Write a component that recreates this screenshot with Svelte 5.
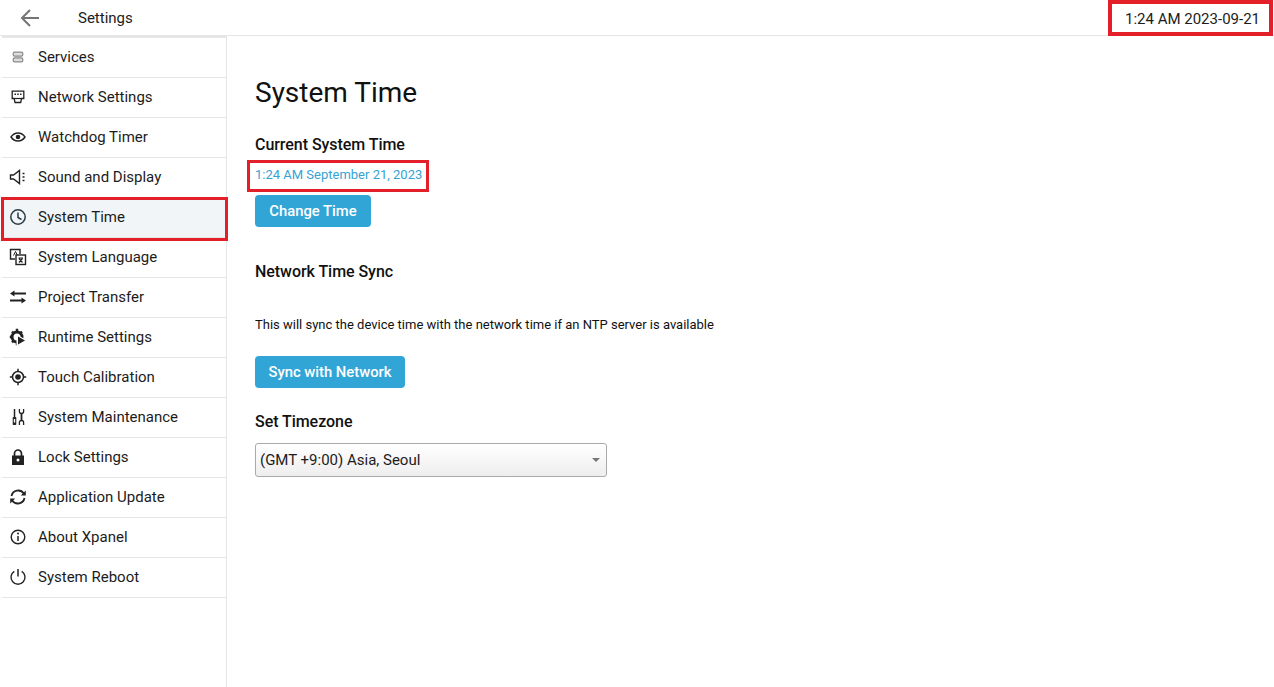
<script>
  const menu = [
    { label: 'Services', icon: 'services' },
    { label: 'Network Settings', icon: 'network' },
    { label: 'Watchdog Timer', icon: 'eye' },
    { label: 'Sound and Display', icon: 'sound' },
    { label: 'System Time', icon: 'clock', active: true },
    { label: 'System Language', icon: 'language' },
    { label: 'Project Transfer', icon: 'transfer' },
    { label: 'Runtime Settings', icon: 'runtime' },
    { label: 'Touch Calibration', icon: 'touch' },
    { label: 'System Maintenance', icon: 'tools' },
    { label: 'Lock Settings', icon: 'lock' },
    { label: 'Application Update', icon: 'update' },
    { label: 'About Xpanel', icon: 'info' },
    { label: 'System Reboot', icon: 'power' }
  ]
</script>

<div class="page">
  <header class="topbar">
    <div class="left">
      <svg class="back" viewBox="0 0 20 20" width="20" height="20">
        <path d="M19 10H2M10 2l-8 8 8 8" fill="none" stroke="#757575" stroke-width="2" />
      </svg>
      <span class="title">Settings</span>
    </div>
    <div class="clock">1:24 AM 2023-09-21</div>
  </header>

  <div class="body">
    <nav class="sidebar">
      {#each menu as item}
        <div class="row" class:active={item.active}>
          <svg class="icon" viewBox="0 0 18 18" width="18" height="18">
            {#if item.icon === 'services'}
              <rect x="4.2" y="4.2" width="9.6" height="4" rx="1.4" fill="#ddd" stroke="#8a8a8a" stroke-width="1.2" />
              <rect x="4.2" y="9.8" width="9.6" height="4" rx="1.4" fill="#ddd" stroke="#8a8a8a" stroke-width="1.2" />
            {:else if item.icon === 'network'}
              <path d="M3.200 3.200h11.600v7.300h-2.300l-.8 4H6l-.8-4H3.200z" fill="none" stroke="#222" stroke-width="1.300" />
              <path d="M5.500 6.200h1.500M8.200 6.200h1.500M11 6.200h1.500" stroke="#222" stroke-width="1.400" />
              <path d="M5.500 10.500h7" stroke="#222" stroke-width="1.200" />
            {:else if item.icon === 'eye'}
              <path d="M2 9C3.800 6.300 6 5 9 5s5.200 1.300 7 4c-1.800 2.700-4 4-7 4s-5.200-1.300-7-4z" fill="none" stroke="#222" stroke-width="1.400" />
              <circle cx="9" cy="9" r="2.300" fill="#222" />
            {:else if item.icon === 'sound'}
              <path d="M1.500 7v4h3l6 4.500v-13l-6 4.500z" fill="none" stroke="#222" stroke-width="1.400" />
              <path d="M13.500 5.500h2M13.500 9h2M13.500 12.500h2" stroke="#222" stroke-width="1.500" />
            {:else if item.icon === 'clock'}
              <circle cx="9" cy="9" r="7.200" fill="none" stroke="#2a3b47" stroke-width="1.500" />
              <path d="M9 4.500V9.500l3.500 2" fill="none" stroke="#2a3b47" stroke-width="1.500" />
            {:else if item.icon === 'language'}
              <path d="M11 6V1.500H1.500V11H6" fill="none" stroke="#222" stroke-width="1.400" />
              <rect x="7" y="7" width="9.500" height="9.500" fill="none" stroke="#222" stroke-width="1.400" />
              <path d="M4.500 7.500l2-4 1.700 3.500" fill="none" stroke="#222" stroke-width="1" />
              <path d="M9.500 10h4.500M10 14.500l3.500-4M10 10.500l3.500 4" fill="none" stroke="#222" stroke-width="1.200" />
            {:else if item.icon === 'transfer'}
              <path d="M5 5.500h12M13 12.500H1" stroke="#222" stroke-width="1.800" />
              <path d="M5.500 2.500v6L1 5.500zM12.500 9.500v6l4.500-3z" fill="#222" />
            {:else if item.icon === 'runtime'}
              <circle cx="8" cy="9" r="5" fill="none" stroke="#222" stroke-width="3" />
              <path d="M8 .8v3M8 14.200v3M.8 9h3M3 3.600l2 2M3 14.400l2-2M13 3.600l-2 2" stroke="#222" stroke-width="2.400" />
              <path d="M7.500 6.500V18L18 12.200z" fill="#fff" />
              <path d="M9 8.500v8l7-4z" fill="#222" />
            {:else if item.icon === 'touch'}
              <circle cx="9" cy="9" r="5.500" fill="none" stroke="#222" stroke-width="1.500" />
              <circle cx="9" cy="9" r="2.800" fill="#222" />
              <path d="M9 .8v2.800M9 14.400v2.800M.8 9h2.800M14.400 9h2.800" stroke="#222" stroke-width="1.500" />
            {:else if item.icon === 'tools'}
              <path d="M5.500 1v8" stroke="#222" stroke-width="1.500" />
              <rect x="3.700" y="9" width="3.600" height="8" rx=".8" fill="#222" />
              <rect x="4.800" y="11" width="1.400" height="3.500" fill="#fff" />
              <path d="M12.500 5v8" stroke="#222" stroke-width="1.800" />
              <path d="M10.400 1v2.500c0 1.200.9 2 2.100 2s2.100-.8 2.100-2V1M10.400 17v-2.500c0-1.200.9-2 2.100-2s2.100.8 2.100 2V17" fill="none" stroke="#222" stroke-width="1.300" />
            {:else if item.icon === 'lock'}
              <path d="M5.500 8V5.500a3.500 3.500 0 0 1 7 0V8" fill="none" stroke="#222" stroke-width="1.700" />
              <path d="M3 7.500h12V17H3z" fill="#222" />
              <circle cx="9" cy="12" r="1.500" fill="#fff" />
            {:else if item.icon === 'update'}
              <path d="M2.500 8A6.800 6.800 0 0 1 14.800 5.500" fill="none" stroke="#222" stroke-width="1.800" />
              <path d="M15.500 10A6.800 6.800 0 0 1 3.200 12.500" fill="none" stroke="#222" stroke-width="1.800" />
              <path d="M16.800 2.500v5h-5zM1.200 15.500v-5h5z" fill="#222" />
            {:else if item.icon === 'info'}
              <circle cx="9" cy="9" r="6.800" fill="none" stroke="#222" stroke-width="1.400" />
              <path d="M9 8v5" stroke="#222" stroke-width="1.500" />
              <circle cx="9" cy="5.600" r="1" fill="#222" />
            {:else if item.icon === 'power'}
              <path d="M5.300 3.300a7 7 0 1 0 7.400 0" fill="none" stroke="#222" stroke-width="1.400" />
              <path d="M9 1v7.500" stroke="#222" stroke-width="1.500" />
            {/if}
          </svg>
          <span>{item.label}</span>
        </div>
      {/each}
    </nav>

    <main class="content">
      <h1>System Time</h1>

      <h2 class="current">Current System Time</h2>
      <div class="now">1:24 AM September 21, 2023</div>
      <button class="change">Change Time</button>

      <h2 class="sync">Network Time Sync</h2>
      <p>This will sync the device time with the network time if an NTP server is available</p>
      <button class="network">Sync with Network</button>

      <h2 class="zone">Set Timezone</h2>
      <div class="select">
        <span>(GMT +9:00) Asia, Seoul</span>
        <i class="caret"></i>
      </div>
    </main>
  </div>
</div>

<style>
  :global(body) {
    background: #fff;
    font-family: Roboto, "Liberation Sans", sans-serif;
    color: #1c1c1c;
  }

  .page {
    height: 687px;
    display: flex;
    flex-direction: column;
    overflow: hidden;
  }

  .topbar {
    height: 36px;
    box-sizing: border-box;
    display: flex;
    justify-content: space-between;
    align-items: flex-start;
    border-bottom: 1px solid #e6e6e6;
  }

  .left {
    height: 35px;
    display: flex;
    align-items: center;
    padding-left: 20px;
    gap: 38px;
  }

  .back {
    display: block;
  }

  .title {
    font-size: 15px;
  }

  .clock {
    width: 165px;
    height: 36px;
    box-sizing: border-box;
    margin-right: 1px;
    padding: 1px 9px 0 0;
    border: 4px solid #e3202a;
    display: flex;
    align-items: center;
    justify-content: flex-end;
    font-size: 15px;
    flex: none;
  }

  .body {
    flex: 1;
    display: flex;
  }

  .sidebar {
    width: 225px;
    margin-left: 2px;
    box-sizing: border-box;
    border-right: 1px solid #e6e6e6;
    border-top: 2px solid #e6e6e6;
  }

  .row {
    height: 40px;
    box-sizing: border-box;
    border-bottom: 1px solid #e6e6e6;
    display: flex;
    align-items: center;
    gap: 11px;
    padding: 0 0 2px 7px;
    font-size: 15px;
  }

  .row.active {
    background: #f1f5f7;
    position: relative;
  }

  /* annotation frame sits a little past the row on every side */
  .row.active::after {
    content: '';
    position: absolute;
    inset: -1px -2px -4px -1px;
    border: 3px solid #e3202a;
    pointer-events: none;
  }

  .icon {
    display: block;
    flex: none;
  }

  .content {
    flex: 1;
    padding: 0 28px;
    display: flex;
    flex-direction: column;
    align-items: flex-start;
  }

  h1 {
    margin: 39px 0 0;
    font-size: 28px;
    font-weight: 400;
    line-height: 36px;
    color: #111;
  }

  h2 {
    margin: 0;
    font-size: 16px;
    font-weight: 500;
    line-height: 20px;
    letter-spacing: -0.05px;
    color: #111;
  }

  .current {
    margin-top: 24px;
  }

  .now {
    margin: 5px 0 3px -8px;
    width: 182px;
    height: 32px;
    box-sizing: border-box;
    padding: 0 0 4px 8px;
    border: 3px solid #e3202a;
    display: flex;
    align-items: center;
    font-size: 13px;
    color: #36a3d3;
    text-indent: -3px;
  }

  button {
    height: 32px;
    padding: 0;
    border: none;
    border-radius: 4px;
    background: #31a5d6;
    color: #fff;
    font-family: inherit;
    font-size: 14.800px;
    font-weight: 500;
  }

  .change {
    width: 116px;
  }

  .network {
    width: 150px;
  }

  .sync {
    margin-top: 35px;
  }

  p {
    margin: 35px 0 23px;
    font-size: 13px;
    line-height: 16px;
    color: #111;
  }

  .zone {
    margin-top: 24px;
  }

  .select {
    margin-top: 11px;
    width: 352px;
    height: 34px;
    box-sizing: border-box;
    border: 1px solid #aaa;
    border-radius: 3px;
    background: linear-gradient(to bottom, #fff, #eee);
    display: flex;
    align-items: center;
    justify-content: space-between;
    padding: 0 6px 0 4px;
    font-size: 15px;
  }

  .caret {
    width: 0;
    height: 0;
    border-left: 4px solid transparent;
    border-right: 4px solid transparent;
    border-top: 4px solid #777;
  }
</style>
